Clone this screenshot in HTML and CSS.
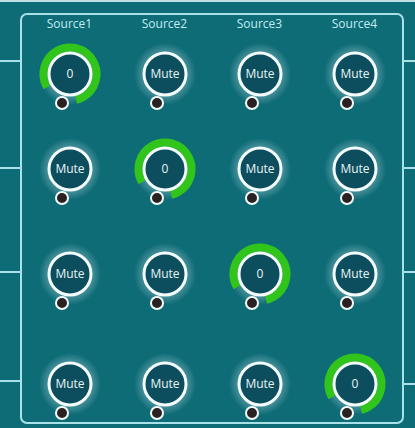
FILE: index.html
```html
<html>
    <head>
        <meta charset="utf-8">
        <title>Sources</title>
        <link rel="stylesheet" href="styles.css">
    </head>
    <body>
        <svg class="defs" width="0" height="0">
            <defs>
                <radialGradient id="halo" gradientUnits="userSpaceOnUse" cx="34" cy="32" r="31">
                    <stop offset="0.66" stop-color="#b4d6dc" stop-opacity="0.4"/>
                    <stop offset="1" stop-color="#b4d6dc" stop-opacity="0"/>
                </radialGradient>
            </defs>
        </svg>
        <div id="screen">
            <div class="ticks">
                <div class="tick t1"></div>
                <div class="tick t2"></div>
                <div class="tick t3"></div>
                <div class="tick t4"></div>
            </div>
            <div id="panel">
                <div class="label">Source1</div>
                <div class="label">Source2</div>
                <div class="label">Source3</div>
                <div class="label">Source4</div>
            </div>
            <div class="ticks right">
                <div class="tick t1"></div>
                <div class="tick t2"></div>
                <div class="tick t3"></div>
                <div class="tick t4r"></div>
            </div>
        </div>
        <script type="text/javascript">
            var panel = document.getElementById('panel');
            var rows = ['r1', 'r2', 'r3', 'r4'];

            function knob(on){
                var s = '<svg class="knob" width="68" height="72" viewBox="0 0 68 72">';
                s += '<circle cx="34" cy="32" r="31" fill="url(#halo)"/>';
                if (on) {
                    s += '<circle cx="34" cy="32" r="26.5" fill="none" stroke="#31c41b" stroke-width="8" stroke-dasharray="131.8 200" transform="rotate(150 34 32)"/>';
                }
                s += '<circle cx="34" cy="32" r="21" fill="#0c4d5e" stroke="#f4fbfb" stroke-width="3"/>';
                if (on) {
                    s += '<text x="34" y="36" class="val">0</text>';
                }else{
                    s += '<text x="34" y="36" class="val">Mute</text>';
                }
                s += '<circle cx="26" cy="61" r="6" fill="#2a2123" stroke="#f4fbfb" stroke-width="2"/>';
                s += '</svg>';
                return s;
            }

            for(r=0; r<4; r++){
                for(c=0; c<4; c++){
                    var cell = document.createElement('div');
                    cell.className = 'cell ' + rows[r];
                    cell.innerHTML = knob(r == c);
                    panel.appendChild(cell);
                }
            }
        </script>
    </body>
</html>
```

FILE: styles.css
```css
body {
    margin: 0;
    width: 415px;
    height: 428px;
    overflow: hidden;
    background: #0e6c77;
    font-family: "Open Sans", "Liberation Sans", sans-serif;
}
.defs {
    position: absolute;
}
#screen {
    display: flex;
    height: 426px;
    border-top: 2px solid #bfe0e3;
}
.ticks {
    width: 20px;
    display: flex;
    flex-direction: column;
}
.ticks.right {
    width: 11px;
}
.tick {
    height: 2px;
    background: #a9e1e8;
}
.t1 {
    margin-top: 58px;
}
.t2 {
    margin-top: 105px;
}
.t3 {
    margin-top: 102px;
}
.t4 {
    margin-top: 107px;
}
.t4r {
    margin-top: 110px;
}
#panel {
    box-sizing: border-box;
    width: 384px;
    height: 411px;
    margin-top: 11px;
    border: 2px solid #a9e1e8;
    border-radius: 7px;
    display: grid;
    grid-template-columns: repeat(4, 1fr);
    grid-template-rows: 27px 95px 105px 110px 1fr;
}
.label {
    padding-top: 2px;
    text-align: center;
    font-size: 12px;
    line-height: 14px;
    color: #c3ebf0;
}
.cell {
    display: flex;
    justify-content: center;
    align-items: flex-start;
}
.knob {
    display: block;
}
.val {
    fill: #e8f6f7;
    font-family: "Open Sans", "Liberation Sans", sans-serif;
    font-size: 12px;
    font-weight: 500;
    text-anchor: middle;
}
```
